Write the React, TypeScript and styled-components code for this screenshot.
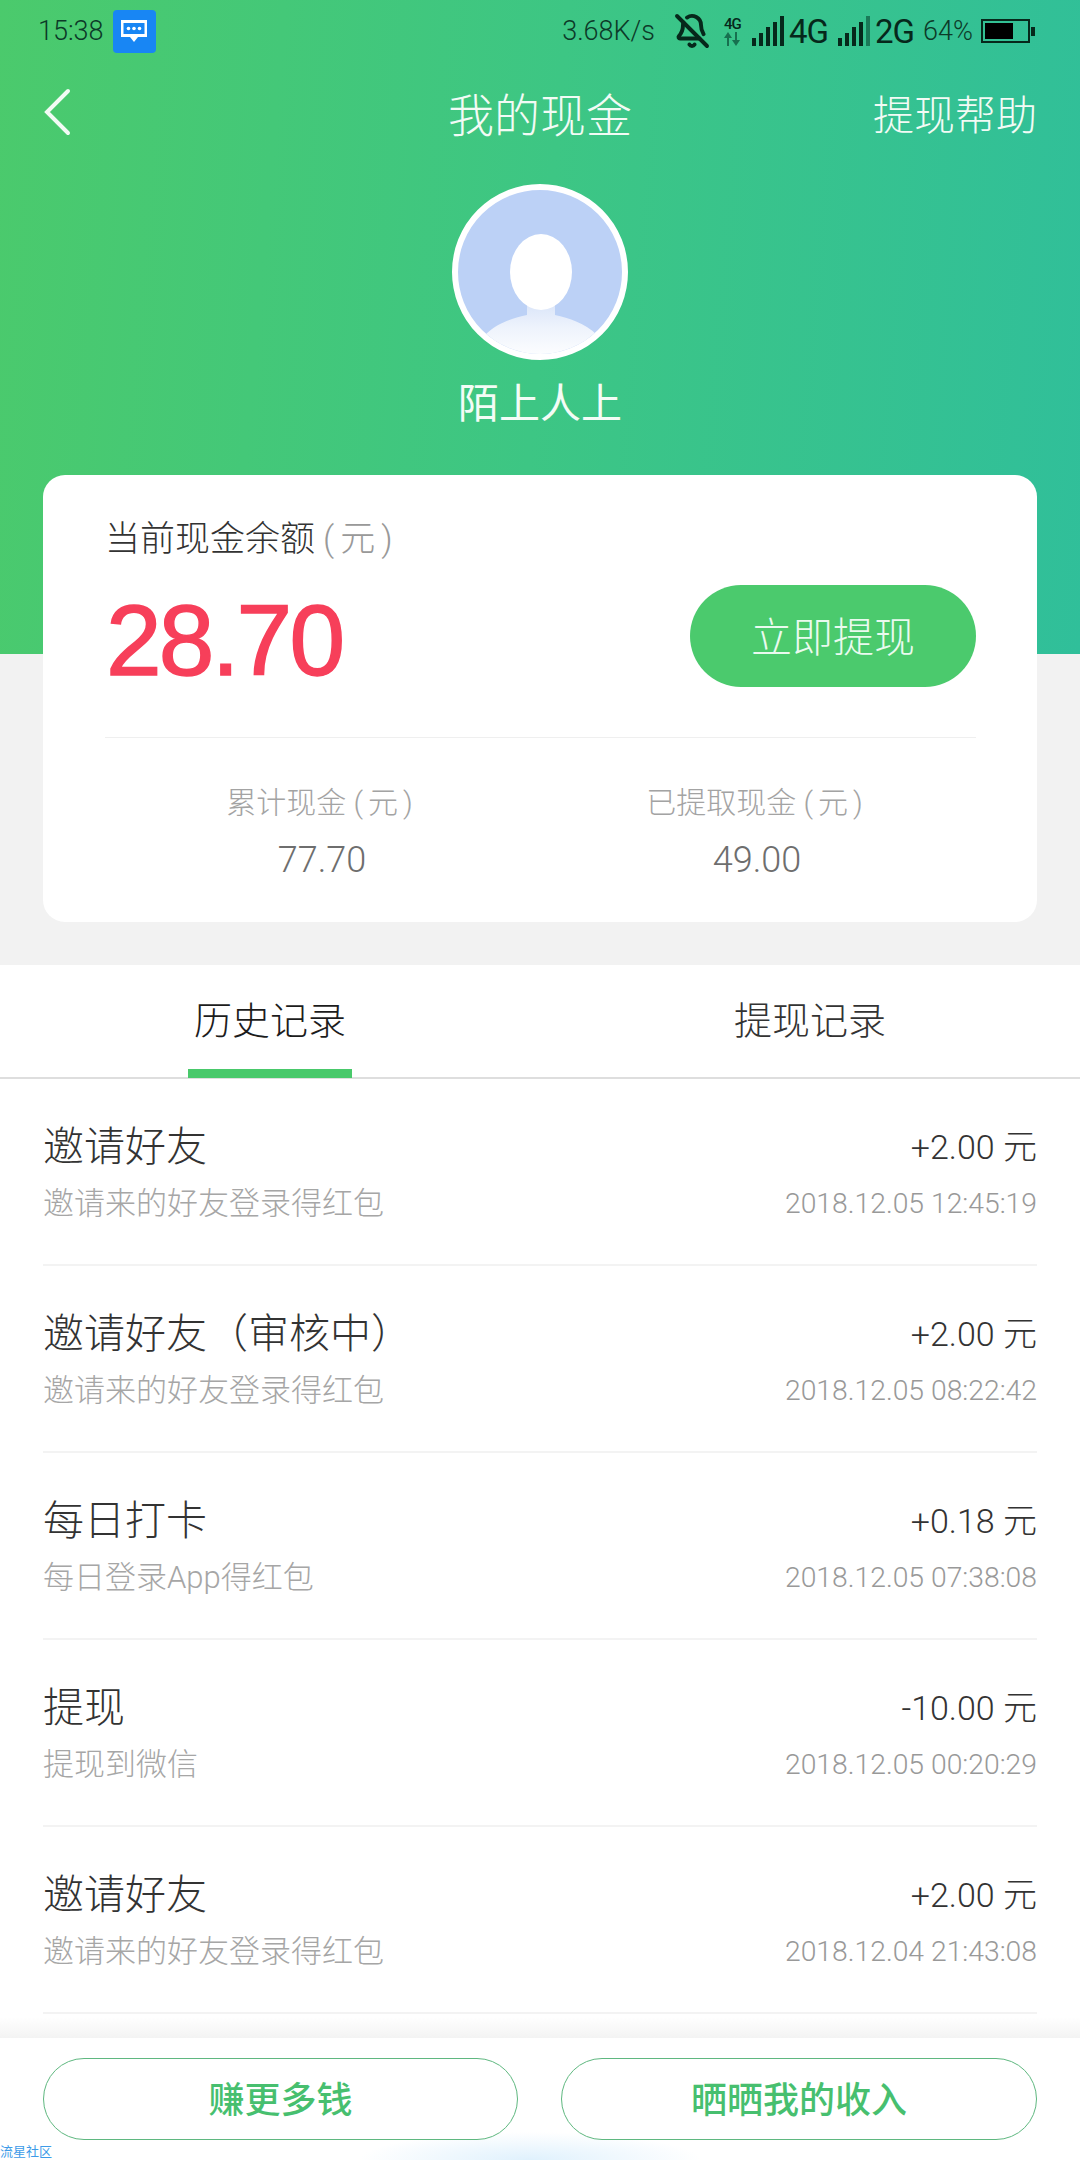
import styled, { createGlobalStyle } from "styled-components";
import { BellOff } from "lucide-react";

const CJK = `Roboto, "Noto Sans CJK SC", sans-serif`;

const GlobalStyle = createGlobalStyle`
  html, body { margin: 0; padding: 0; background: #fff; }
  body { font-family: ${CJK}; }
  * { box-sizing: border-box; }
`;

const Page = styled.div`
  width: 1080px;
  height: 2160px;
  overflow: hidden;
  display: flex;
  flex-direction: column;
  background: #fff;
`;

const Top = styled.div`
  height: 965px;
  background-color: #f2f2f2;
  background-image: linear-gradient(95deg, #4bca6c 0%, #3dc684 50%, #30bf9a 100%);
  background-size: 100% 654px;
  background-repeat: no-repeat;
  display: flex;
  flex-direction: column;
`;

const StatusBar = styled.div`
  height: 62px;
  padding: 0 44px 0 38px;
  display: flex;
  align-items: center;
  color: #0c3a28;
`;

const StatusText = styled.span<{ $size?: number; $gap?: number; $weight?: number }>`
  font-size: ${(p) => p.$size ?? 27}px;
  font-weight: ${(p) => p.$weight ?? 300};
  margin-left: ${(p) => p.$gap ?? 0}px;
  line-height: 1;
  letter-spacing: ${(p) => (p.$weight ? -1 : 0)}px;
  color: ${(p) => (p.$weight ? "#06281b" : "#0c3a28")};
`;

const MsgBadge = styled.div`
  width: 43px;
  height: 43px;
  margin: 0 auto 0 9px;
  border-radius: 4px;
  background: #1886f4;
  display: flex;
  align-items: center;
  justify-content: center;
`;

const BellSlot = styled.div<{ $gap: number }>`
  display: flex;
  margin-left: ${(p) => p.$gap}px;
`;

const NetStack = styled.div`
  width: 22px;
  margin-left: 14px;
  display: flex;
  flex-direction: column;
  align-items: flex-start;
  color: #06281b;
  font-size: 15px;
  font-weight: 500;
  line-height: 15px;
  letter-spacing: -1px;
`;

const NavBar = styled.div`
  height: 100px;
  padding: 0 43px;
  display: grid;
  grid-template-columns: 1fr auto 1fr;
  align-items: center;
  color: #f2fbf5;
`;

const BackIcon = styled.svg`
  display: block;
`;

const NavTitle = styled.div`
  font-size: 46px;
  font-weight: 300;
`;

const NavHelp = styled.div`
  font-size: 41px;
  font-weight: 300;
  justify-self: end;
`;

const Profile = styled.div`
  margin-top: 22px;
  display: flex;
  flex-direction: column;
  align-items: center;
`;

const Avatar = styled.div`
  width: 176px;
  height: 176px;
  border-radius: 50%;
  border: 6px solid #fff;
  overflow: hidden;
  background: #bcd1f6;
`;

const UserName = styled.div`
  margin-top: 15px;
  font-size: 41px;
  line-height: 58px;
  color: #f3fcf6;
  font-weight: 400;
`;

const BalanceCard = styled.div`
  margin: 42px 43px 0;
  height: 447px;
  border-radius: 22px;
  background: #fff;
  padding: 40px 61px 0 62px;
`;

const BalanceLabel = styled.div`
  font-size: 35px;
  line-height: 50px;
  font-weight: 300;
  color: #333;
`;

const Unit = styled.span`
  color: #999;
  margin-left: 8px;
  letter-spacing: 6px;
`;

const BalanceRow = styled.div`
  margin-top: 20px;
  height: 102px;
  display: flex;
  align-items: center;
  justify-content: space-between;
`;

const BalanceValue = styled.div`
  margin: 8px 0 0 1px;
  font-family: "Liberation Sans", sans-serif;
  font-size: 100px;
  font-weight: 400;
  letter-spacing: -2.8px;
  -webkit-text-stroke: 1.5px #f73f5a;
  color: #f73f5a;
  line-height: 1;
`;

const WithdrawButton = styled.button`
  width: 286px;
  height: 102px;
  padding: 0 0 5px;
  border: 0;
  border-radius: 51px;
  background: #4bca6d;
  color: #eafaef;
  font-family: ${CJK};
  font-size: 41px;
  font-weight: 300;
`;

const CardDivider = styled.div`
  margin-top: 50px;
  height: 1px;
  background: #efefef;
`;

const Stats = styled.div`
  margin-top: 40px;
  display: grid;
  grid-template-columns: 434px 436px;
`;

const Stat = styled.div`
  display: flex;
  flex-direction: column;
  align-items: center;
`;

const StatLabel = styled.div`
  font-size: 30px;
  line-height: 50px;
  font-weight: 300;
  color: #a3a3a3;
`;

const StatUnit = styled.span`
  letter-spacing: 5px;
`;

const StatValue = styled.div`
  margin-top: 7px;
  font-size: 36px;
  line-height: 50px;
  font-weight: 300;
  color: #6e6e6e;
`;

const Tabs = styled.div`
  height: 114px;
  display: grid;
  grid-template-columns: 540px 540px;
  border-bottom: 2px solid #dedede;
`;

const Tab = styled.div<{ $active?: boolean }>`
  position: relative;
  display: flex;
  justify-content: center;
  padding-top: 28px;
  font-size: 38px;
  line-height: 56px;
  font-weight: 300;
  color: ${(p) => (p.$active ? "#1c1c1c" : "#333")};

  &::after {
    content: "";
    display: ${(p) => (p.$active ? "block" : "none")};
    position: absolute;
    left: 188px;
    bottom: -1px;
    width: 164px;
    height: 9px;
    background: #49c96b;
  }

  & + &::before {
    content: "";
    position: absolute;
    left: 0;
    top: 36px;
    width: 1px;
    height: 42px;
    background: #f3f3f3;
  }
`;

const List = styled.div`
  flex: 1;
  padding: 0 43px;
  overflow: hidden;
`;

const Row = styled.div`
  height: 187px;
  padding-top: 34px;
  border-bottom: 2px solid #f3f3f3;
  display: grid;
  grid-template-columns: 1fr auto;
  grid-template-rows: 60px 54px;
  align-items: center;
`;

const RowTitle = styled.div`
  font-size: 41px;
  font-weight: 300;
  color: #333;
`;

const RowAmount = styled.div`
  padding-top: 2px;
  font-size: 34px;
  font-weight: 300;
  color: #333;
  text-align: right;
`;

const RowDesc = styled.div`
  font-size: 31px;
  font-weight: 300;
  color: #a6a6a6;
`;

const RowTime = styled.div`
  padding-top: 6px;
  font-size: 28.3px;
  font-weight: 300;
  color: #999;
  text-align: right;
  white-space: pre;
`;

const FooterShade = styled.div`
  height: 21px;
  background: linear-gradient(#fff, #f3f3f3);
`;

const Footer = styled.div`
  position: relative;
  height: 122px;
  padding: 20px 43px;
  display: grid;
  grid-template-columns: 475px 476px;
  justify-content: space-between;
  background: radial-gradient(ellipse 170px 28px at 530px 122px, #dff1fd 0%, #ffffff 100%);
`;

const OutlineButton = styled.button`
  height: 82px;
  padding: 0 0 4px;
  border: 1.5px solid #5fb880;
  border-radius: 41px;
  background: #fff;
  color: #47bf6f;
  font-family: ${CJK};
  font-size: 36px;
  font-weight: 500;
`;

const Watermark = styled.div`
  position: absolute;
  left: 0;
  bottom: 0;
  font-size: 13px;
  line-height: 17px;
  color: #3d9be8;
`;

const rows = [
  { title: "邀请好友", desc: "邀请来的好友登录得红包", amount: "+2.00 元", time: "2018.12.05 12:45:19" },
  { title: "邀请好友（审核中）", desc: "邀请来的好友登录得红包", amount: "+2.00 元", time: "2018.12.05 08:22:42" },
  { title: "每日打卡", desc: "每日登录App得红包", amount: "+0.18 元", time: "2018.12.05 07:38:08" },
  { title: "提现", desc: "提现到微信", amount: "-10.00 元", time: "2018.12.05 00:20:29" },
  { title: "邀请好友", desc: "邀请来的好友登录得红包", amount: "+2.00 元", time: "2018.12.04 21:43:08" },
];

// five rising bars, last one dim on the 2G sim
const Signal = ({ gap, lastColor }: { gap: number; lastColor: string }) => (
  <svg width="33" height="30" viewBox="0 0 33 30" style={{ marginLeft: gap, flexShrink: 0 }}>
    <rect x="0" y="22" width="4" height="8" fill="#06281b" />
    <rect x="7" y="17" width="4" height="13" fill="#06281b" />
    <rect x="14" y="11" width="4" height="19" fill="#06281b" />
    <rect x="21" y="6" width="4" height="24" fill="#06281b" />
    <rect x="28" y="0" width="4" height="30" fill={lastColor} />
  </svg>
);

const App = () => {
  return (
    <Page>
      <GlobalStyle />
      <Top>
        <StatusBar>
          <StatusText>15:38</StatusText>
          <MsgBadge>
            <svg width="28" height="24" viewBox="0 0 28 24">
              <path d="M1 1h26v17H18l-4 5-4-5H1z" fill="#fff" />
              <rect x="3.5" y="4" width="21" height="11" fill="#1886f4" />
              <circle cx="8.5" cy="9.5" r="1.8" fill="#fff" />
              <circle cx="14" cy="9.5" r="1.8" fill="#fff" />
              <circle cx="19.5" cy="9.5" r="1.8" fill="#fff" />
            </svg>
          </MsgBadge>
          <StatusText>3.68K/s</StatusText>
          <BellSlot $gap={19}>
            <BellOff size={36} color="#06281b" strokeWidth={2.6} />
          </BellSlot>
          <NetStack>
            4G
            <svg width="16" height="14" viewBox="0 0 16 14">
              <path d="M4 0 0 6h3v8h2V6h3zM12 14l4-6h-3V0h-2v8H8z" fill="#17704f" />
            </svg>
          </NetStack>
          <Signal gap={6} lastColor="#06281b" />
          <StatusText $size={33} $gap={4} $weight={400}>4G</StatusText>
          <Signal gap={10} lastColor="#1a7a58" />
          <StatusText $size={33} $gap={4} $weight={400}>2G</StatusText>
          <StatusText $gap={9}>64%</StatusText>
          <svg width="55" height="24" viewBox="0 0 55 24" style={{ marginLeft: 8, flexShrink: 0 }}>
            <rect x="1" y="1" width="47" height="22" fill="none" stroke="#06281b" strokeWidth="2" />
            <rect x="4" y="4" width="28" height="16" fill="#000" />
            <rect x="50" y="8" width="4" height="9" fill="#06281b" />
          </svg>
        </StatusBar>
        <NavBar>
          <BackIcon width="28" height="48" viewBox="0 0 28 48">
            <path d="M25 3 4 24l21 21" fill="none" stroke="#f2fbf5" strokeWidth="4" strokeLinecap="round" />
          </BackIcon>
          <NavTitle>我的现金</NavTitle>
          <NavHelp>提现帮助</NavHelp>
        </NavBar>
        <Profile>
          <Avatar>
            <svg width="164" height="164" viewBox="0 0 164 164">
              <defs>
                <linearGradient id="body" x1="0" y1="0" x2="0" y2="1">
                  <stop offset="0" stopColor="#d3e0f8" />
                  <stop offset="0.5" stopColor="#eef3fc" />
                  <stop offset="1" stopColor="#ffffff" />
                </linearGradient>
              </defs>
              <path d="M69 105h28v20c14 3 30 8 42 20v25H27v-25c12-12 28-17 42-20z" fill="url(#body)" />
              <ellipse cx="83" cy="82" rx="31" ry="38" fill="#fff" />
            </svg>
          </Avatar>
          <UserName>陌上人上</UserName>
        </Profile>
        <BalanceCard>
          <BalanceLabel>
            当前现金余额<Unit>(元)</Unit>
          </BalanceLabel>
          <BalanceRow>
            <BalanceValue>28.70</BalanceValue>
            <WithdrawButton>立即提现</WithdrawButton>
          </BalanceRow>
          <CardDivider />
          <Stats>
            <Stat>
              <StatLabel>累计现金 <StatUnit>(元)</StatUnit></StatLabel>
              <StatValue>77.70</StatValue>
            </Stat>
            <Stat>
              <StatLabel>已提取现金 <StatUnit>(元)</StatUnit></StatLabel>
              <StatValue>49.00</StatValue>
            </Stat>
          </Stats>
        </BalanceCard>
      </Top>
      <Tabs>
        <Tab $active>历史记录</Tab>
        <Tab>提现记录</Tab>
      </Tabs>
      <List>
        {rows.map((r, i) => (
          <Row key={i}>
            <RowTitle>{r.title}</RowTitle>
            <RowAmount>{r.amount}</RowAmount>
            <RowDesc>{r.desc}</RowDesc>
            <RowTime>{r.time}</RowTime>
          </Row>
        ))}
      </List>
      <FooterShade />
      <Footer>
        <OutlineButton>赚更多钱</OutlineButton>
        <OutlineButton>晒晒我的收入</OutlineButton>
        <Watermark>流星社区</Watermark>
      </Footer>
    </Page>
  );
};

export default App;
